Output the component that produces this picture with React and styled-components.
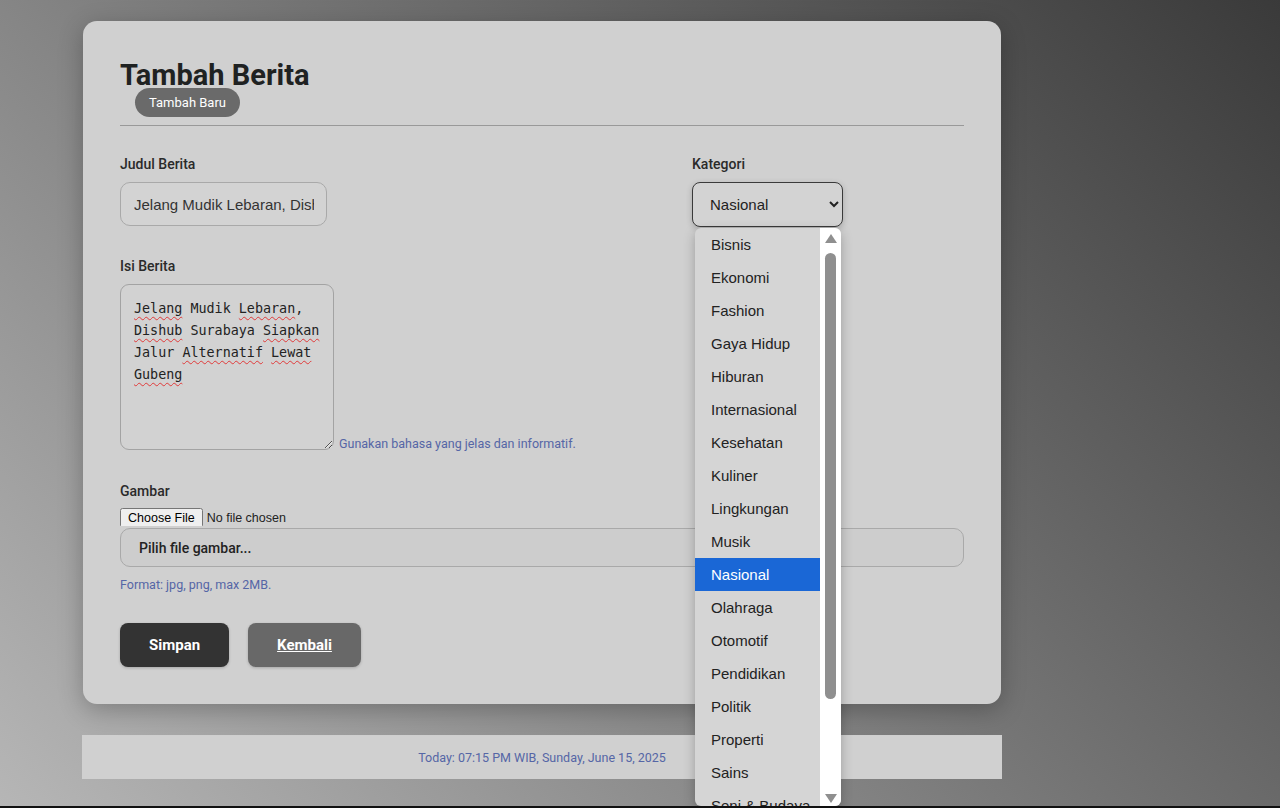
import styled, { createGlobalStyle } from "styled-components";

const GlobalStyle = createGlobalStyle`
  html {
    background: #111;
  }
  body {
    margin: 0;
    height: 806px;
    overflow: hidden;
    font-family: Roboto, "Liberation Sans", sans-serif;
    background: linear-gradient(45deg, #b6b6b6 0%, #8a8a8a 35%, #3a3a3a 100%);
  }
`;

const Page = styled.div`
  width: 920px;
  margin-left: 82px;
  padding-top: 21px;
`;

const Card = styled.div`
  position: relative;
  background: #d0d0d0;
  border-radius: 14px;
  box-shadow: 0 6px 24px rgba(0, 0, 0, 0.25);
  margin-left: 1px;
  width: 918px;
  box-sizing: border-box;
  padding: 37px 37px 37px 37px;
`;

const Title = styled.h1`
  margin: 0;
  font-size: 29px;
  font-weight: 700;
  color: #1f2222;
  line-height: 34px;
`;

const Badge = styled.span`
  display: inline-block;
  margin: -5px 0 0 15px;
  padding: 0 14px;
  height: 29px;
  line-height: 29px;
  border-radius: 15px;
  background: #6a6a6a;
  color: #fff;
  font-size: 13px;
`;

const Divider = styled.hr`
  border: none;
  border-top: 1px solid #999;
  margin: 8px 0 29px;
`;

const FormGrid = styled.div`
  display: grid;
  grid-template-columns: 548px 1fr;
  column-gap: 24px;
`;

const Field = styled.div`
  display: flex;
  flex-direction: column;
  align-items: flex-start;
  margin-bottom: ${(p) => p.$mb || 0}px;
  grid-column: ${(p) => (p.$full ? "1 / -1" : "auto")};
  position: relative;
`;

const Label = styled.label`
  font-size: 14px;
  font-weight: 500;
  color: #2a2a2a;
  line-height: 18px;
  margin-bottom: ${(p) => (p.$tight ? 8 : 9)}px;
`;

const TextInput = styled.input`
  width: 207px;
  height: 44px;
  box-sizing: border-box;
  border: 1px solid #a9a9a9;
  border-radius: 10px;
  background: #d3d3d3;
  padding: 0 12px 0 13px;
  font-family: "Liberation Sans", Arial, sans-serif;
  font-size: 15px;
  color: #333;
  outline: none;
`;

const SelectBox = styled.select`
  width: 151px;
  height: 45px;
  box-sizing: border-box;
  border: 1px solid #3a3a3a;
  border-radius: 8px;
  background: #d3d3d3;
  padding: 0 8px 0 13px;
  font-family: "Liberation Sans", Arial, sans-serif;
  font-size: 15px;
  color: #222;
  box-shadow: 0 2px 6px rgba(0, 0, 0, 0.2);
  outline: none;
`;

const AreaRow = styled.div`
  display: flex;
  align-items: flex-end;
  gap: 5px;
`;

const TextArea = styled.div`
  width: 214px;
  height: 166px;
  box-sizing: border-box;
  border: 1px solid #a3a3a3;
  border-radius: 9px;
  background: #d2d2d2;
  padding: 13px 6px 10px 13px;
  font-family: "DejaVu Sans Mono", "Liberation Mono", monospace;
  font-size: 13.4px;
  line-height: 22px;
  color: #222;
  resize: both;
  overflow: hidden;
`;

const Typo = styled.span`
  text-decoration: underline wavy #e03a3a;
  text-decoration-thickness: 1px;
  text-underline-offset: 3px;
`;

const Hint = styled.span`
  font-size: 12.5px;
  color: #5566a6;
  line-height: 16px;
  margin-top: ${(p) => p.$mt || 0}px;
  margin-bottom: ${(p) => p.$mb || 0}px;
`;

const FileInput = styled.input`
  font-size: 12.5px;
  font-family: "Liberation Sans", Arial, sans-serif;
  color: #222;
  height: 18px;
  margin-bottom: 2px;
`;

const FileBox = styled.div`
  width: 100%;
  height: 39px;
  box-sizing: border-box;
  border: 1px solid #a9a9a9;
  border-radius: 10px;
  background: #cdcdcd;
  padding: 0 18px;
  display: flex;
  align-items: center;
  font-size: 14px;
  font-weight: 500;
  color: #222;
`;

const Actions = styled.div`
  display: flex;
  gap: 19px;
  margin-top: 30px;
`;

const Button = styled.button`
  height: 44px;
  padding: 0 29px;
  border: none;
  border-radius: 8px;
  background: ${(p) => (p.$dark ? "#333" : "#686868")};
  color: #fff;
  font-family: Roboto, sans-serif;
  font-size: 15px;
  font-weight: 700;
  text-decoration: ${(p) => (p.$link ? "underline" : "none")};
  box-shadow: 0 1px 3px rgba(0, 0, 0, 0.2);
`;

const Footer = styled.div`
  margin-top: 31px;
  height: 44px;
  background: #d0d0d0;
  display: flex;
  align-items: center;
  justify-content: center;
  font-size: 12.5px;
  color: #5566a6;
`;

const DropList = styled.div`
  position: absolute;
  left: 3px;
  top: 73px;
  width: 146px;
  height: 578px;
  background: #d5d5d5;
  border-radius: 6px;
  overflow: hidden;
  box-shadow: 0 4px 12px rgba(0, 0, 0, 0.25);
  display: flex;
  z-index: 10;
`;

const Options = styled.div`
  flex: 1;
  display: flex;
  flex-direction: column;
`;

const Option = styled.div`
  height: 33px;
  flex-shrink: 0;
  display: flex;
  align-items: center;
  padding-left: 16px;
  font-family: "Liberation Sans", Arial, sans-serif;
  font-size: 15px;
  color: ${(p) => (p.$active ? "#fff" : "#222")};
  background: ${(p) => (p.$active ? "#1a67d6" : "transparent")};
`;

const ScrollTrack = styled.div`
  width: 21px;
  background: #fff;
  display: flex;
  flex-direction: column;
  align-items: center;
  padding: 5px 0 2px;
  box-sizing: border-box;
`;

const Thumb = styled.div`
  width: 11px;
  height: 446px;
  margin-top: 9px;
  border-radius: 6px;
  background: #8f8f8f;
`;

const Arrow = styled.svg`
  width: 14px;
  height: 11px;
  flex-shrink: 0;
  margin-top: ${(p) => (p.$down ? "auto" : "0")};
`;

const categories = [
  "Bisnis",
  "Ekonomi",
  "Fashion",
  "Gaya Hidup",
  "Hiburan",
  "Internasional",
  "Kesehatan",
  "Kuliner",
  "Lingkungan",
  "Musik",
  "Nasional",
  "Olahraga",
  "Otomotif",
  "Pendidikan",
  "Politik",
  "Properti",
  "Sains",
  "Seni & Budaya",
];

export default function App() {
  return (
    <>
      <GlobalStyle />
      <Page>
        <Card>
          <Title>Tambah Berita</Title>
          <Badge>Tambah Baru</Badge>
          <Divider />
          <FormGrid>
            <Field $mb={30}>
              <Label>Judul Berita</Label>
              <TextInput defaultValue="Jelang Mudik Lebaran, Dishub Surabaya Siapkan Jalur Alternatif Lewat Gubeng" />
            </Field>
            <Field $mb={30}>
              <Label>Kategori</Label>
              <SelectBox defaultValue="Nasional">
                {categories.map((c) => (
                  <option key={c}>{c}</option>
                ))}
              </SelectBox>
              <DropList>
                <Options>
                  {categories.map((c) => (
                    <Option key={c} $active={c === "Nasional"}>
                      {c}
                    </Option>
                  ))}
                </Options>
                <ScrollTrack>
                  <Arrow viewBox="0 0 14 11">
                    <path d="M7 1 L13 10 L1 10 Z" fill="#8f8f8f" />
                  </Arrow>
                  <Thumb />
                  <Arrow $down viewBox="0 0 14 11">
                    <path d="M1 1 L13 1 L7 10 Z" fill="#8f8f8f" />
                  </Arrow>
                </ScrollTrack>
              </DropList>
            </Field>
            <Field $mb={32} $full>
              <Label>Isi Berita</Label>
              <AreaRow>
                <TextArea>
                  <Typo>Jelang</Typo> Mudik <Typo>Lebaran</Typo>,{" "}
                  <Typo>Dishub</Typo> Surabaya <Typo>Siapkan</Typo> Jalur{" "}
                  <Typo>Alternatif</Typo> <Typo>Lewat</Typo> <Typo>Gubeng</Typo>
                </TextArea>
                <Hint $mb={-2}>Gunakan bahasa yang jelas dan informatif.</Hint>
              </AreaRow>
            </Field>
            <Field $full>
              <Label $tight>Gambar</Label>
              <FileInput type="file" />
              <FileBox>Pilih file gambar...</FileBox>
              <Hint $mt={10}>Format: jpg, png, max 2MB.</Hint>
            </Field>
          </FormGrid>
          <Actions>
            <Button $dark>Simpan</Button>
            <Button $link>Kembali</Button>
          </Actions>
        </Card>
        <Footer>Today: 07:15 PM WIB, Sunday, June 15, 2025</Footer>
      </Page>
    </>
  );
}
